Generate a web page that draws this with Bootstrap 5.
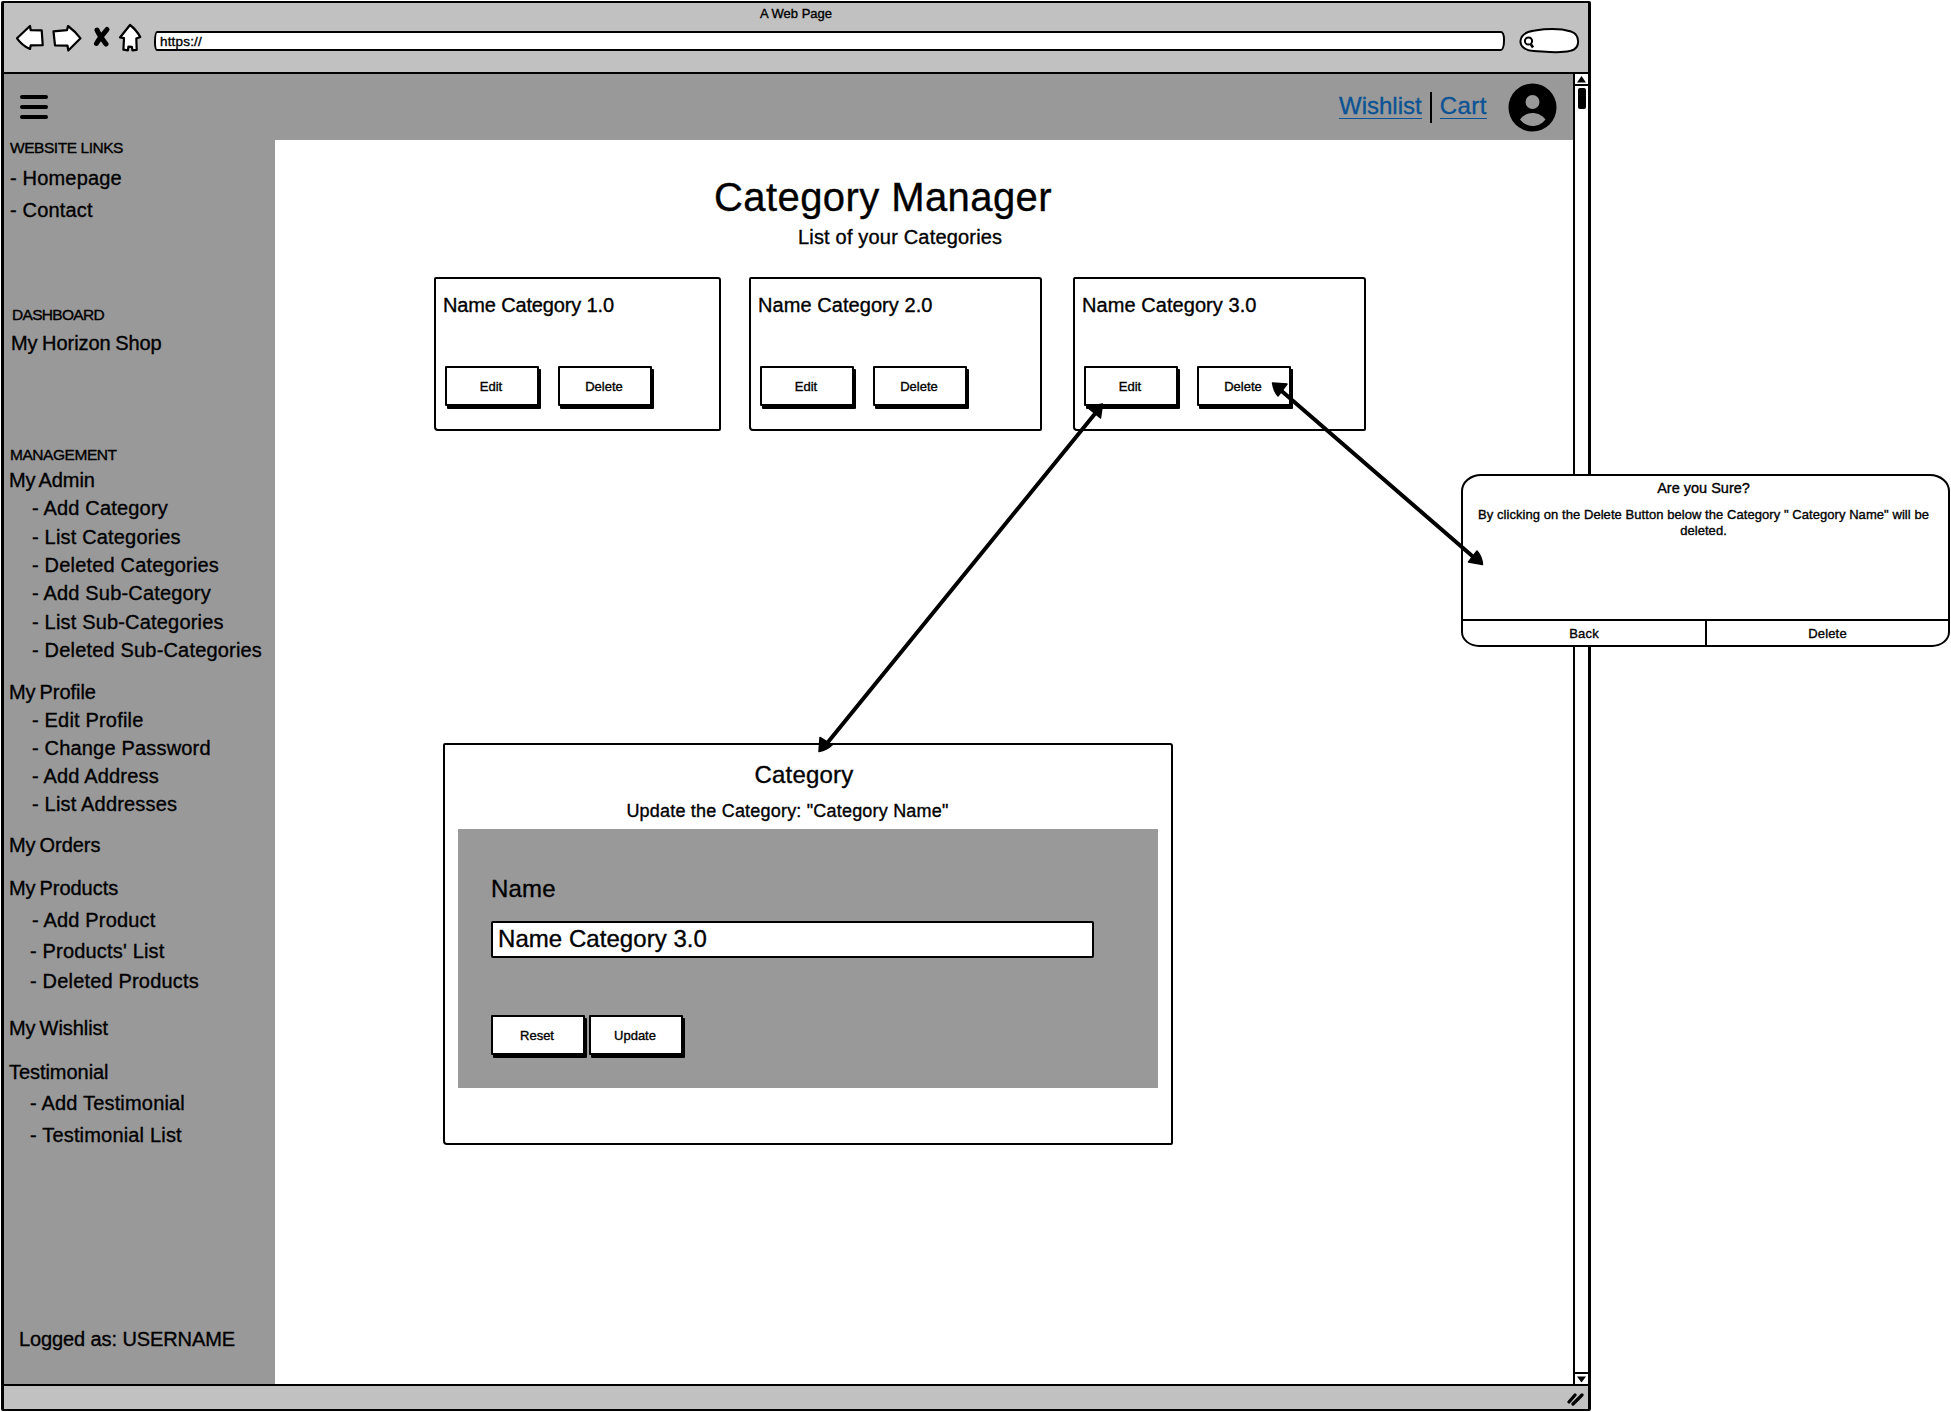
<!DOCTYPE html>
<html lang="en">
<head>
<meta charset="utf-8">
<meta name="viewport" content="width=device-width, initial-scale=1">
<title>Category Manager</title>
<link href="https://cdn.jsdelivr.net/npm/bootstrap@5.3.0/dist/css/bootstrap.min.css" rel="stylesheet">
<style>
  body { font-family: "Liberation Sans", Arial, sans-serif; font-size: 20px; line-height: 28px; color: #000; background: #fff; letter-spacing: .18px; -webkit-text-stroke: .35px currentColor; overflow: hidden; }
  .board { width: 1951px; height: 1412px; padding: 1px; }
  .browser { width: 1590px; height: 1410px; border: 2px solid #000; border-width: 2px 3px 2px 3px; border-radius: 2px; }

  /* browser chrome */
  .chrome { height: 71px; background: #c1c1c1; border-bottom: 2px solid #000; }
  .chrome-title { font-size: 13px; line-height: 20px; letter-spacing: 0; padding-top: 1px; }
  .chrome-tools { padding-left: 12px; height: 32px; margin-top: -1px; }
  .url-field { width: 1351px; height: 20px; margin: 8px 0 0 10px; border: 2px solid #000; border-radius: 3px 4px 4px 3px / 10px 8px 10px 8px; background: #fff; font-size: 13.5px; line-height: 17px; padding-left: 4px; }
  .find-field { margin: 3px 0 0 13px; }

  /* page header */
  .page-top { height: 66px; background: #999; padding: 0 16px; }
  .page-top a { color: #0b5394; font-size: 24px; line-height: 25px; letter-spacing: 0; border-bottom: 1.5px solid #0b5394; margin-top: -2px; }
  .page-top .cart-link { letter-spacing: .5px; margin-right: 17px; }
  .rule-v { width: 2px; height: 31px; background: #000; margin: 0 8px; }

  /* sidebar */
  .side { width: 271px; background: #999; padding: 0 0 31px 6px; }
  .side h2 { font-size: 15.5px; line-height: 16px; font-weight: 400; letter-spacing: -.45px; margin: 0; }
  .side h2.dash { margin-top: 83px; padding-left: 2px; letter-spacing: -.7px; }
  .side h2.manage { margin-top: 90px; }
  .side .top-item { letter-spacing: -.05px; word-spacing: -1.5px; margin-left: -1px; }
  .side .shop { margin: 6px 0 0 1px; letter-spacing: -.05px; word-spacing: -1px; }
  .side .admin { margin-top: 3px; }
  .side .profile { margin-top: 14px; }
  .side .orders { margin-top: 13px; }
  .side .products { margin-top: 15px; }
  .side .wishes { margin-top: 19px; }
  .side ul { padding-left: 22px; margin: 0; }
  .side .nudge { margin-top: 1px; }
  .side .shift { margin-left: -2px; }
  .side .pull { margin-top: -1px; }
  .side .g-links { gap: 4px; }
  .side .g-products { gap: 3px; }
  .side .t-list { padding: 3px 0 0 20px; }
  .side .user { padding-left: 9px; letter-spacing: -.1px; }

  /* scrollbar and status bar */
  .scroller { width: 15px; border-left: 2px solid #000; background: #fff; }
  .scroll-btn { height: 12px; border-bottom: 2px solid #000; }
  .scroll-btn.end { border-bottom: 0; border-top: 2px solid #000; }
  .scroll-thumb { width: 8px; height: 21px; margin: 2px 0 0 3px; background: #000; border-radius: 2px; }
  .foot { height: 25px; background: #c1c1c1; border-top: 2px solid #000; }

  /* main column */
  .content { padding: 34px 0 0 159px; }
  .content h1 { font-size: 40px; line-height: 46px; font-weight: 400; letter-spacing: .42px; margin: 0 0 0 280px; }
  .lead-in { margin: 3px 0 0 364px; }
  .frame { border: 2px solid #000; border-radius: 2px 3px 2px 4px; background: #fff; }
  .cat-row { margin-top: 26px; }
  .cat { width: 293px; height: 154px; padding: 12px 0 0 7px; }
  .cat.first { width: 287px; }
  .cat.second { margin-left: 28px; }
  .cat.third { margin-left: 31px; }
  .cat-name { letter-spacing: .06px; }
  .first .cat-name { letter-spacing: -.15px; }
  .cat-btns { gap: 19px; margin: 47px 0 0 2px; }
  .sketch { width: 94px; height: 40px; padding: 0 2px 0 0; border: 2px solid #000; border-radius: 1px; background: #fff; color: #000; font-size: 13px; line-height: 37px; letter-spacing: 0; box-shadow: 2px 3px 0 #000; }
  .editor { width: 730px; height: 402px; margin: 312px 0 0 9px; padding: 16px 13px 0 13px; }
  .editor h3 { font-size: 24px; line-height: 28px; font-weight: 400; margin: 0 8px 0 0; }
  .editor-sub { font-size: 18px; line-height: 26px; letter-spacing: .2px; margin: 9px 41px 0 0; }
  .editor form { background: #999; height: 259px; margin-top: 5px; padding: 45px 0 0 33px; }
  .editor label { font-size: 24px; line-height: 30px; letter-spacing: .2px; }
  .entry { width: 603px; height: 37px; margin-top: 17px; border: 2px solid #000; border-radius: 2px; padding: 0 0 2px 5px; font-size: 24px; color: #000; letter-spacing: .05px; background: #fff; }
  .btn-line { gap: 4px; margin-top: 57px; }

  /* delete dialog */
  .confirm { left: 1461px; top: 474px; width: 489px; height: 173px; border: 2px solid #000; border-radius: 20px 20px 18px 18px / 17px 17px 15px 15px; background: #fff; overflow: hidden; font-size: 13px; line-height: 16px; }
  .confirm-title { font-size: 14.5px; line-height: 20px; letter-spacing: 0; padding: 2px 4px 0 0; }
  .confirm-body { padding: 9px 14px 0 10px; height: 121px; letter-spacing: .06px; }
  .confirm-foot { border-top: 2px solid #000; line-height: 25px; }
  .confirm-foot .left { width: 242px; }
  .confirm-foot .right { border-left: 2px solid #000; }
  .arrows { left: 0; top: 0; pointer-events: none; }
</style>
</head>
<body>
<div class="board position-relative">
  <div class="browser d-flex flex-column">
    <header class="chrome">
      <div class="chrome-title text-center">A Web Page</div>
      <div class="chrome-tools d-flex align-items-start">
        <svg width="128" height="30" viewBox="16 22 128 30" fill="#fff" stroke="#000" stroke-width="2.2" stroke-linejoin="round" stroke-linecap="round">
          <path d="M17 37.3 30 25l.7 4.2 11 .1 1 14.8-12 .3-.7 3.6C25.500 46 20 41.500 17 37.300Z"/>
          <path d="M53.500 30.300 67 29.200 68 25c4 3 9 7.500 12.500 12.300L68.300 49.500 67.500 44.700 55 44.300Z"/>
          <path d="M97 29c2 5 6 10 9 14M107 28.500c-4 5-8 9-10.500 14" stroke-width="5"/>
          <path d="M130 24 120 36.500l4 .7-.6 11.500 4.500.6.500-3.600 3.500.1.500 3.500 4.300-.5-.4-11.300 4-1.500C138 32 134 27 130 24Z"/>
        </svg>
        <div class="url-field">https://</div>
        <svg class="find-field" width="62" height="28" viewBox="1518 26 62 28" fill="#fff" stroke="#000" stroke-width="2">
          <path d="M1535 30.500C1548 28.500 1561 28.500 1571 31.500C1577 33.500 1578.500 38 1578 43C1577.500 49 1573 51 1564 51.800C1554 53 1544 51.500 1534 51C1525 50.500 1520 46 1520.500 41C1521 35 1527 31.500 1535 30.500Z"/>
          <circle cx="1528.500" cy="41" r="3.600"/><path d="m1531 44.500 2 3" stroke-width="2.500"/>
        </svg>
      </div>
    </header>

    <div class="d-flex flex-grow-1">
      <div class="flex-grow-1 d-flex flex-column">
        <nav class="page-top d-flex align-items-center">
          <svg width="28" height="26" viewBox="0 0 28 26" stroke="#000" stroke-width="4" stroke-linecap="round"><path d="M2 3h24M2 13h24M2 23h24"/></svg>
          <a href="#" class="ms-auto text-decoration-none">Wishlist</a>
          <span class="rule-v"></span>
          <a href="#" class="cart-link text-decoration-none">Cart</a>
          <svg class="ms-1" width="49" height="49" viewBox="0 0 49 49"><circle cx="24.500" cy="24.500" r="24" fill="#000"/><g fill="#999"><circle cx="24.500" cy="19" r="7"/><path d="M12 36.500C15 32 20 30 24.500 30S34 32 37.500 36.500C34 41 29 43 24.500 43S15.500 41 12 36.500Z"/></g></svg>
        </nav>
        <div class="d-flex flex-grow-1">
          <aside class="side d-flex flex-column">
            <h2>WEBSITE LINKS</h2>
            <div class="d-flex flex-column g-links mt-2"><span>- Homepage</span><span>- Contact</span></div>
            <h2 class="dash">DASHBOARD</h2>
            <div class="shop">My Horizon Shop</div>
            <h2 class="manage">MANAGEMENT</h2>
            <div class="top-item admin">My Admin</div>
            <ul class="list-unstyled">
              <li>- Add Category</li>
              <li class="nudge">- List Categories</li>
              <li>- Deleted Categories</li>
              <li>- Add Sub-Category</li>
              <li class="nudge">- List Sub-Categories</li>
              <li>- Deleted Sub-Categories</li>
            </ul>
            <div class="top-item profile">My Profile</div>
            <ul class="list-unstyled">
              <li>- Edit Profile</li>
              <li>- Change Password</li>
              <li>- Add Address</li>
              <li>- List Addresses</li>
            </ul>
            <div class="top-item orders">My Orders</div>
            <div class="top-item products">My Products</div>
            <ul class="list-unstyled d-flex flex-column g-products mt-1">
              <li>- Add Product</li>
              <li class="shift">- Products' List</li>
              <li class="shift pull">- Deleted Products</li>
            </ul>
            <div class="top-item wishes">My Wishlist</div>
            <div class="top-item mt-3">Testimonial</div>
            <ul class="t-list list-unstyled d-flex flex-column g-links">
              <li>- Add Testimonial</li>
              <li>- Testimonial List</li>
            </ul>
            <div class="user mt-auto">Logged as: USERNAME</div>
          </aside>

          <main class="content flex-grow-1">
            <h1>Category Manager</h1>
            <p class="lead-in mb-0">List of your Categories</p>
            <div class="cat-row d-flex">
              <section class="frame cat first">
                <div class="cat-name">Name Category 1.0</div>
                <div class="cat-btns d-flex"><button class="sketch">Edit</button><button class="sketch">Delete</button></div>
              </section>
              <section class="frame cat second">
                <div class="cat-name">Name Category 2.0</div>
                <div class="cat-btns d-flex"><button class="sketch">Edit</button><button class="sketch">Delete</button></div>
              </section>
              <section class="frame cat third">
                <div class="cat-name">Name Category 3.0</div>
                <div class="cat-btns d-flex"><button class="sketch">Edit</button><button class="sketch">Delete</button></div>
              </section>
            </div>
            <section class="frame editor">
              <h3 class="text-center">Category</h3>
              <p class="editor-sub text-center mb-0">Update the Category: "Category Name"</p>
              <form>
                <label class="d-block" for="name">Name</label>
                <input class="entry d-block" id="name" type="text" value="Name Category 3.0">
                <div class="btn-line d-flex"><button type="reset" class="sketch">Reset</button><button type="button" class="sketch">Update</button></div>
              </form>
            </section>
          </main>
        </div>
      </div>
      <div class="scroller d-flex flex-column">
        <div class="scroll-btn d-flex justify-content-center align-items-center"><svg width="9" height="7"><path d="M4.500 0 9 6.500H0Z"/></svg></div>
        <div class="scroll-thumb"></div>
        <div class="scroll-btn end mt-auto d-flex justify-content-center align-items-center"><svg width="9" height="7"><path d="M0 .5H9L4.500 6.500Z"/></svg></div>
      </div>
    </div>
    <footer class="foot d-flex justify-content-end align-items-center pe-1"><svg width="18" height="16" stroke="#000" stroke-width="3.200" stroke-linecap="round"><path d="M3 12 9 5M7 14 16 5"/></svg></footer>
  </div>

  <div class="confirm position-absolute text-center">
    <div class="confirm-title">Are you Sure?</div>
    <div class="confirm-body">By clicking on the Delete Button below the Category " Category Name" will be deleted.</div>
    <div class="confirm-foot d-flex"><div class="left">Back</div><div class="right flex-grow-1">Delete</div></div>
  </div>

  <svg class="arrows position-absolute" width="1951" height="1412" stroke="#000" stroke-width="4" stroke-linejoin="round">
    <path d="M824 747 1098 410M1277 387 1478 561"/>
    <g stroke-width="1.500"><path d="M819 751.500 820 737.500 832 745Q827 750 819 751.500ZM1102.500 404 1087 407 1100.500 418ZM1272.500 383 1287 384 1278 396Q1274 392 1272.500 383ZM1482.500 564.500 1468.500 562 1477 551Q1482 557 1482.500 564.500Z"/></g>
  </svg>
</div>
<script src="https://cdn.jsdelivr.net/npm/bootstrap@5.3.0/dist/js/bootstrap.bundle.min.js"></script>
</body>
</html>
